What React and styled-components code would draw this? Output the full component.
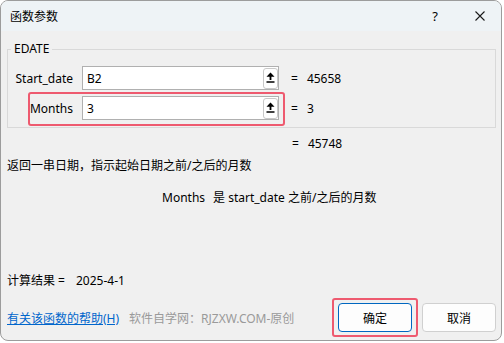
import React from "react";
import styled, { createGlobalStyle } from "styled-components";

const GlobalStyle = createGlobalStyle`
  body {
    margin: 0;
    background: #ffffff;
    font-family: "Noto Sans", "Noto Sans CJK SC", sans-serif;
    font-size: 12px;
    color: #000;
  }
`;

const params = [
  { name: "Start_date", value: "B2", result: "45658" },
  { name: "Months", value: "3", result: "3", marked: true },
];

const App = () => {
  return (
    <>
      <GlobalStyle />
      <Window>
        <TitleBar>
          <Title>函数参数</Title>
          <HelpMark>?</HelpMark>
          <CloseButton>
            <svg width="10" height="10" viewBox="0 0 10 10">
              <path d="M0.5 0.5 L9.5 9.5 M9.5 0.5 L0.5 9.5" stroke="#1a1a1a" strokeWidth="1.1" />
            </svg>
          </CloseButton>
        </TitleBar>
        <Body>
          <GroupBox>
            <Legend>EDATE</Legend>
            {params.map((p) => (
              <ParamRow key={p.name}>
                {p.marked && <Mark />}
                <ParamLabel>{p.name}</ParamLabel>
                <InputBox>
                  <InputText>{p.value}</InputText>
                  <RefButton>
                    <svg width="9" height="11" viewBox="0 0 9 11">
                      <path d="M4.5 0.5 L8.5 4.8 L0.5 4.8 Z" fill="#000" />
                      <path d="M4.5 4 L4.5 8" stroke="#000" strokeWidth="1.8" />
                      <path d="M0.5 10 L8.5 10" stroke="#000" strokeWidth="1.4" />
                    </svg>
                  </RefButton>
                </InputBox>
                <Equals>
                  =<EqValue>{p.result}</EqValue>
                </Equals>
              </ParamRow>
            ))}
          </GroupBox>
          <TotalRow>
            =<EqValue>45748</EqValue>
          </TotalRow>
          <Description>返回一串日期，指示起始日期之前/之后的月数</Description>
          <ParamHelp>
            <ParamName>Months</ParamName>是 start_date 之前/之后的月数
          </ParamHelp>
          <Result>
            计算结果 =<ResultValue>2025-4-1</ResultValue>
          </Result>
          <Footer>
            <HelpLink href="#">有关该函数的帮助(H)</HelpLink>
            <Watermark>软件自学网：RJZXW.COM-原创</Watermark>
            <Buttons>
              <DialogButton primary>
                确定
                <ButtonMark />
              </DialogButton>
              <DialogButton>取消</DialogButton>
            </Buttons>
          </Footer>
        </Body>
      </Window>
    </>
  );
};

const Window = styled.div`
  width: 502px;
  height: 341px;
  box-sizing: border-box;
  border: 1px solid #9c9c9c;
  border-radius: 8px;
  overflow: hidden;
  display: flex;
  flex-direction: column;
  background: #f0f0f0;
`;

const TitleBar = styled.div`
  height: 30px;
  flex-shrink: 0;
  display: flex;
  align-items: center;
  padding-left: 9px;
  background: #eef3f6;
`;

const Title = styled.div`
  flex: 1;
  font-size: 12px;
`;

const HelpMark = styled.div`
  width: 12px;
  font-size: 13px;
  text-align: center;
  margin-right: 34px;
`;

const CloseButton = styled.div`
  display: flex;
  margin-right: 16px;
`;

const Body = styled.div`
  flex: 1;
  display: flex;
  flex-direction: column;
  padding: 10px 5px 0 6px;
`;

const GroupBox = styled.fieldset`
  margin: 0;
  padding: 6px 0 4px 0;
  border: 1px solid #d9d9d9;
  min-width: 0;
`;

const Legend = styled.legend`
  margin-left: 3px;
  padding: 0 3px;
  line-height: 16px;
`;

const ParamRow = styled.div`
  position: relative;
  display: flex;
  align-items: center;
  height: 30px;
`;

const Mark = styled.div`
  position: absolute;
  left: 20px;
  top: -1px;
  width: 257px;
  height: 34px;
  box-sizing: border-box;
  border: 2px solid #ee5a6f;
  border-radius: 3px;
`;

const ParamLabel = styled.div`
  width: 74px;
  padding-right: 9px;
  box-sizing: border-box;
  text-align: right;
  white-space: nowrap;
`;

const InputBox = styled.div`
  width: 197px;
  height: 24px;
  box-sizing: border-box;
  border: 1px solid #b0b0b0;
  background: #fff;
  display: flex;
  align-items: center;
  justify-content: space-between;
  padding: 0 0 0 4px;
`;

const InputText = styled.span``;

const RefButton = styled.div`
  width: 15px;
  height: 21px;
  box-sizing: border-box;
  border: 1px solid #c9c9c9;
  border-radius: 3px;
  background: #fff;
  display: flex;
  align-items: flex-start;
  justify-content: center;
  padding-top: 3px;
`;

const Equals = styled.div`
  margin-left: 12px;
`;

const EqValue = styled.span`
  margin-left: 9px;
`;

const TotalRow = styled.div`
  margin: 8px 0 0 285px;
  line-height: 16px;
`;

const Description = styled.div`
  margin-top: 6px;
  line-height: 16px;
`;

const ParamHelp = styled.div`
  margin: 16px 0 0 155px;
  line-height: 16px;
`;

const ParamName = styled.span`
  margin-right: 8px;
`;

const Result = styled.div`
  margin-top: 67px;
  line-height: 16px;
`;

const ResultValue = styled.span`
  margin-left: 11px;
`;

const Footer = styled.div`
  margin-top: auto;
  display: flex;
  align-items: center;
  padding-bottom: 8px;
`;

const HelpLink = styled.a`
  color: #0066cc;
  text-decoration: underline;
`;

const Watermark = styled.span`
  margin-left: 10px;
  color: #9a9a9a;
  flex: 1;
`;

const Buttons = styled.div`
  display: flex;
  gap: 10px;
`;

const DialogButton = styled.div`
  position: relative;
  width: 74px;
  height: 29px;
  box-sizing: border-box;
  border: 1px solid ${(props) => (props.primary ? "#0067c0" : "#d0d0d0")};
  border-radius: 4px;
  background: #fdfdfd;
  display: flex;
  align-items: center;
  justify-content: center;
`;

const ButtonMark = styled.div`
  position: absolute;
  left: -7px;
  top: -6px;
  right: -7px;
  bottom: -6px;
  border: 2px solid #ee5a6f;
  border-radius: 3px;
`;

export default App;
